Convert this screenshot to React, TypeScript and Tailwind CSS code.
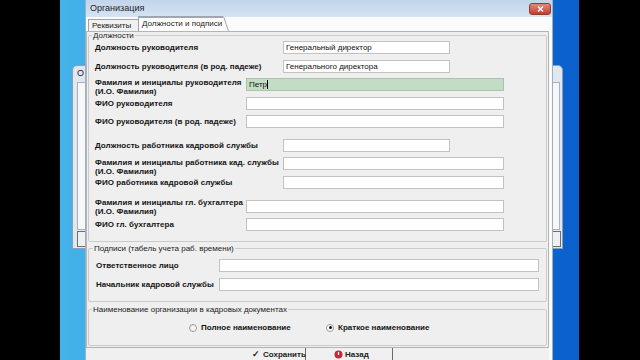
import React from "react";

const F = { fontFamily: '"Liberation Sans", Arial, sans-serif' };

function Input({ w, value, green, caret }: { w: string; value?: string; green?: boolean; caret?: boolean }) {
  return (
    <div
      className={`${w} h-[13px] shrink-0 border flex items-center pl-[2px] text-[8px] leading-[8px] text-[#111] ${
        green ? "bg-[#c3dcc4] border-[#a9c3aa]" : "bg-white border-[#c2c2c2]"
      }`}
    >
      {value}
      {caret && <span className="inline-block w-[1px] h-[9px] bg-black ml-[0px]" />}
    </div>
  );
}

function Row({
  mt,
  lw,
  label,
  label2,
  iw,
  value,
  green,
  caret,
  lmt,
}: {
  mt: string;
  lw: string;
  label: string;
  label2?: string;
  iw: string;
  value?: string;
  green?: boolean;
  caret?: boolean;
  lmt?: string;
}) {
  return (
    <div className={`${mt} h-[13px] flex items-center`}>
      {label2 ? (
        <div className={`${lw} shrink-0 self-start ${lmt ?? ""} text-[8px] leading-[8.5px] font-bold text-[#141414] whitespace-nowrap tracking-[0.05px]`}>
          <div>{label}</div>
          <div>{label2}</div>
        </div>
      ) : (
        <div className={`${lw} shrink-0 text-[8px] leading-[9px] font-bold text-[#141414] whitespace-nowrap tracking-[0.05px]`}>{label}</div>
      )}
      <Input w={iw} value={value} green={green} caret={caret} />
    </div>
  );
}

export default function App() {
  return (
    <div className="w-[640px] h-[360px] bg-black flex overflow-hidden" style={F}>
      <div className="w-[60px] shrink-0" />
      <div className="relative w-[519px] h-[360px] shrink-0 overflow-hidden bg-linear-to-r from-[#45b4ea] via-[#1c7fd8] to-[#0a60cd]">
        {/* window behind */}
        <div className="absolute left-[12px] top-[65px] w-[491px] h-[184px] bg-[#dfe7f0] border border-[#8d9db2] rounded-t-[5px] flex flex-col">
          <div className="h-[16px] pl-[4px] flex items-center">
            <div className="w-[9px] overflow-hidden whitespace-nowrap text-[9px] text-[#222]">О</div>
          </div>
          <div className="ml-[4px] mr-[2px] flex-1 bg-[#f7f7f7] border border-[#a8b2be]" />
          <div className="ml-[4px] mr-[1px] mt-[1px] mb-[1px] h-[16px] bg-[#f0f0f0] border border-[#6f6f6f]" />
        </div>

        {/* main dialog */}
        <div className="absolute left-[25px] top-0 w-[468px] h-[380px] bg-[#e2ebf5] border-l border-r border-[#9fb0c4] flex flex-col">
          <div className="h-[17px] shrink-0 flex items-center justify-between pl-[4px] pr-[1px] bg-linear-to-b from-[#c2d5ea] to-[#d6e3f1]">
            <span className="text-[9px] text-[#1e1e1e]">Организация</span>
            <div className="w-[22px] h-[12px] rounded-[3px] bg-linear-to-b from-[#e08a7c] to-[#c23b2c] border border-[#8e3a30] flex items-center justify-center">
              <svg width="7" height="6" viewBox="0 0 7 6">
                <path d="M1 0.5 L6 5.5 M6 0.5 L1 5.5" stroke="white" strokeWidth="1.4" />
              </svg>
            </div>
          </div>
          <div className="flex-1 bg-[#fbfbfb] pr-[3px] flex flex-col">
            {/* tabs */}
            <div className="h-[14px] shrink-0 flex items-end pl-[2px]">
              <div className="w-[50px] h-[12px] border-l border-t border-[#a3a3a3] bg-[#f1f1f1] pl-[3px] text-[8px] leading-[11px] text-[#222]">
                Реквизиты
              </div>
              <div className="h-[15px] shrink-0 border-l border-t border-[#9aa6b4] bg-white pl-[3px] pr-[1px] text-[8px] leading-[14px] text-[#222] whitespace-nowrap shadow-[inset_0_1px_0_#7fb0e0]">
                Должности и подписи
              </div>
              <svg width="6" height="15" viewBox="0 0 6 15" className="block shrink-0">
                <path d="M0 0 L1 0 L6 15 L0 15 Z" fill="white" />
                <path d="M0.5 0.5 L5.5 15" stroke="#9aa6b4" strokeWidth="1" />
              </svg>
            </div>
            {/* tab page */}
            <div className="border-t border-l border-r border-[#b4b4b4] bg-[#efefef] pl-[1px] pr-[1px] flex flex-col">
              <fieldset className="border border-[#cbcbcb] rounded-[2px] pl-[6px] pb-[10px]">
                <legend className="ml-[-3px] px-[1px] text-[8px] leading-[7px] text-[#222]">Должности</legend>
                <Row mt="mt-[2px]" lw="w-[188px]" label="Должность руководителя" iw="w-[167px]" value="Генеральный директор" />
                <Row mt="mt-[6px]" lw="w-[188px]" label="Должность руководителя (в род. падеже)" iw="w-[167px]" value="Генерального директора" />
                <Row
                  mt="mt-[5px]"
                  lw="w-[151px]"
                  label="Фамилия и инициалы руководителя"
                  label2="(И.О. Фамилия)"
                  lmt="mt-[1px]"
                  iw="w-[258px]"
                  value="Петр"
                  green
                  caret
                />
                <Row mt="mt-[6px]" lw="w-[151px]" label="ФИО руководителя" iw="w-[258px]" />
                <Row mt="mt-[5px]" lw="w-[151px]" label="ФИО руководителя (в род. падеже)" iw="w-[258px]" />
                <Row mt="mt-[11px]" lw="w-[188px]" label="Должность работника кадровой службы" iw="w-[167px]" />
                <Row
                  mt="mt-[5px]"
                  lw="w-[188px]"
                  label="Фамилия и инициалы работника кад. службы"
                  label2="(И.О. Фамилия)"
                  lmt="mt-[2px]"
                  iw="w-[221px]"
                />
                <Row mt="mt-[6px]" lw="w-[188px]" label="ФИО работника кадровой службы" iw="w-[221px]" />
                <Row
                  mt="mt-[11px]"
                  lw="w-[151px]"
                  label="Фамилия и инициалы гл. бухгалтера"
                  label2="(И.О. Фамилия)"
                  lmt="mt-[-1px]"
                  iw="w-[258px]"
                />
                <Row mt="mt-[5px]" lw="w-[151px]" label="ФИО гл. бухгалтера" iw="w-[258px]" />
              </fieldset>

              <fieldset className="mt-[3px] border border-[#cbcbcb] rounded-[2px] pl-[7px] pb-[10px]">
                <legend className="ml-[-3px] px-[1px] text-[8px] leading-[7px] text-[#222]">
                  Подписи (табель учета раб. времени)
                </legend>
                <Row mt="mt-[7px]" lw="w-[123px]" label="Ответственное лицо" iw="w-[320px]" />
                <Row mt="mt-[6px]" lw="w-[123px]" label="Начальник кадровой службы" iw="w-[320px]" />
              </fieldset>

              <fieldset className="mt-[4px] border border-[#cbcbcb] rounded-[2px] pb-[11px]">
                <legend className="ml-[3px] px-[1px] text-[8px] leading-[7px] text-[#222]">
                  Наименование организации в кадровых документах
                </legend>
                <div className="mt-[8px] h-[13px] flex items-center pl-[100px]">
                  <div className="w-[137px] flex items-center">
                    <span className="w-[8px] h-[8px] rounded-full border border-[#9a9a9a] bg-linear-to-br from-[#e8e8e8] to-white" />
                    <span className="ml-[4px] text-[8px] font-bold text-[#141414]">Полное наименование</span>
                  </div>
                  <div className="flex items-center">
                    <span className="w-[8px] h-[8px] rounded-full border border-[#9a9a9a] bg-white flex items-center justify-center">
                      <span className="w-[3px] h-[3px] rounded-full bg-[#111]" />
                    </span>
                    <span className="ml-[4px] text-[8px] font-bold text-[#141414]">Краткое наименование</span>
                  </div>
                </div>
              </fieldset>
              <div className="h-[1px]" />
            </div>
            {/* bottom buttons */}
            <div className="border-t border-[#b4b4b4] bg-[#f0f0f0] h-[20px] flex pl-[135px]">
              <div className="w-[85px] h-[20px] border-r border-[#6a6a6a] flex items-start pt-[2px] pl-[31px] text-[8px] leading-[9px] font-bold text-[#222]">
                <span className="text-[9px] leading-[9px] mr-[3px]">✓</span>Сохранить
              </div>
              <div className="ml-[1px] w-[86px] h-[20px] border-r border-[#6a6a6a] flex items-start pt-[2px] pl-[27px] text-[8px] leading-[9px] font-bold text-[#222]">
                <svg width="9" height="9" viewBox="0 0 9 9" className="mr-[2px]">
                  <circle cx="4.5" cy="4.5" r="4" fill="#c8283a" />
                  <path d="M4.5 2 L4.5 5" stroke="white" strokeWidth="1.2" />
                </svg>
                Назад
              </div>
            </div>
          </div>
        </div>
      </div>
      <div className="flex-1" />
    </div>
  );
}
